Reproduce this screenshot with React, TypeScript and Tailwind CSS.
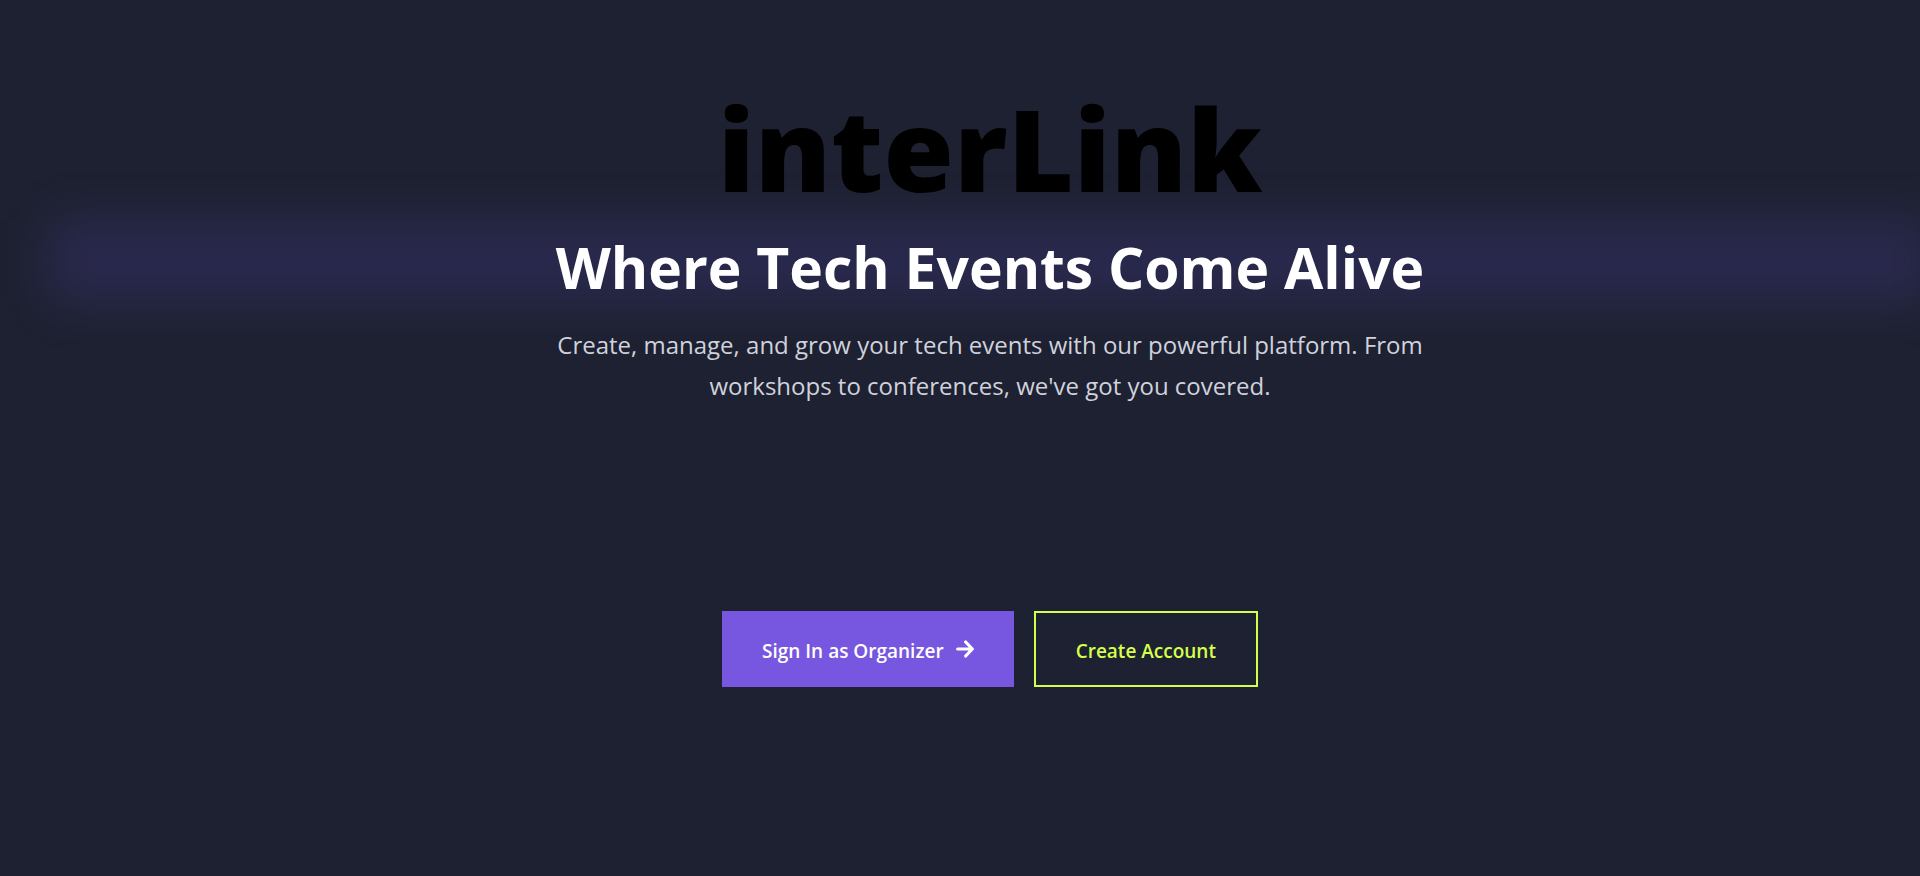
function ArrowIcon() {
  return (
    <svg
      aria-hidden="true"
      viewBox="0 0 18 18"
      className="mb-1 size-[18px]"
      fill="none"
      stroke="currentColor"
      strokeWidth="3.2"
      strokeLinecap="round"
      strokeLinejoin="round"
    >
      <path d="M1.7 9H15.5M9.7 2L16.3 9L9.7 16" />
    </svg>
  );
}

export default function App() {
  return (
    <main className="relative flex min-h-screen flex-col overflow-hidden bg-[#1e2131] pl-[60px] font-['Open_Sans','Noto_Sans',sans-serif]">
      <section className="flex flex-col items-center px-8 pt-[88px] text-center">
        <h1 className="relative z-10 font-['Noto_Sans','Open_Sans',sans-serif] text-[114px] leading-[120px] font-black text-black">
          interLink
        </h1>
        <div className="relative mt-[23px] flex w-full flex-col items-center">
          <div
            aria-hidden="true"
            className="absolute -inset-x-11 -top-3 h-[84px] bg-[#6e55f0]/15 blur-[24px]"
          />
          <h2 className="relative text-[57px] leading-[72px] font-bold text-white">
            Where Tech Events Come Alive
          </h2>
        </div>
        <p className="relative mt-[21px] max-w-[900px] text-[24px] leading-[41px] text-[#cfd2dc]">
          Create, manage, and grow your tech events with our powerful platform. From workshops to conferences, we've got you covered.
        </p>
      </section>
      <div className="mt-[205px] flex items-stretch justify-center gap-5">
        <button
          type="button"
          className="flex h-[76px] items-center gap-3 bg-[#7757e0] px-10 pt-1 text-[19px] font-semibold text-white"
        >
          Sign In as Organizer
          <ArrowIcon />
        </button>
        <button
          type="button"
          className="flex h-[76px] items-center border-2 border-[#d4ff4a] px-10 pt-1 text-[19px] font-semibold text-[#d4ff4a]"
        >
          Create Account
        </button>
      </div>
    </main>
  );
}
